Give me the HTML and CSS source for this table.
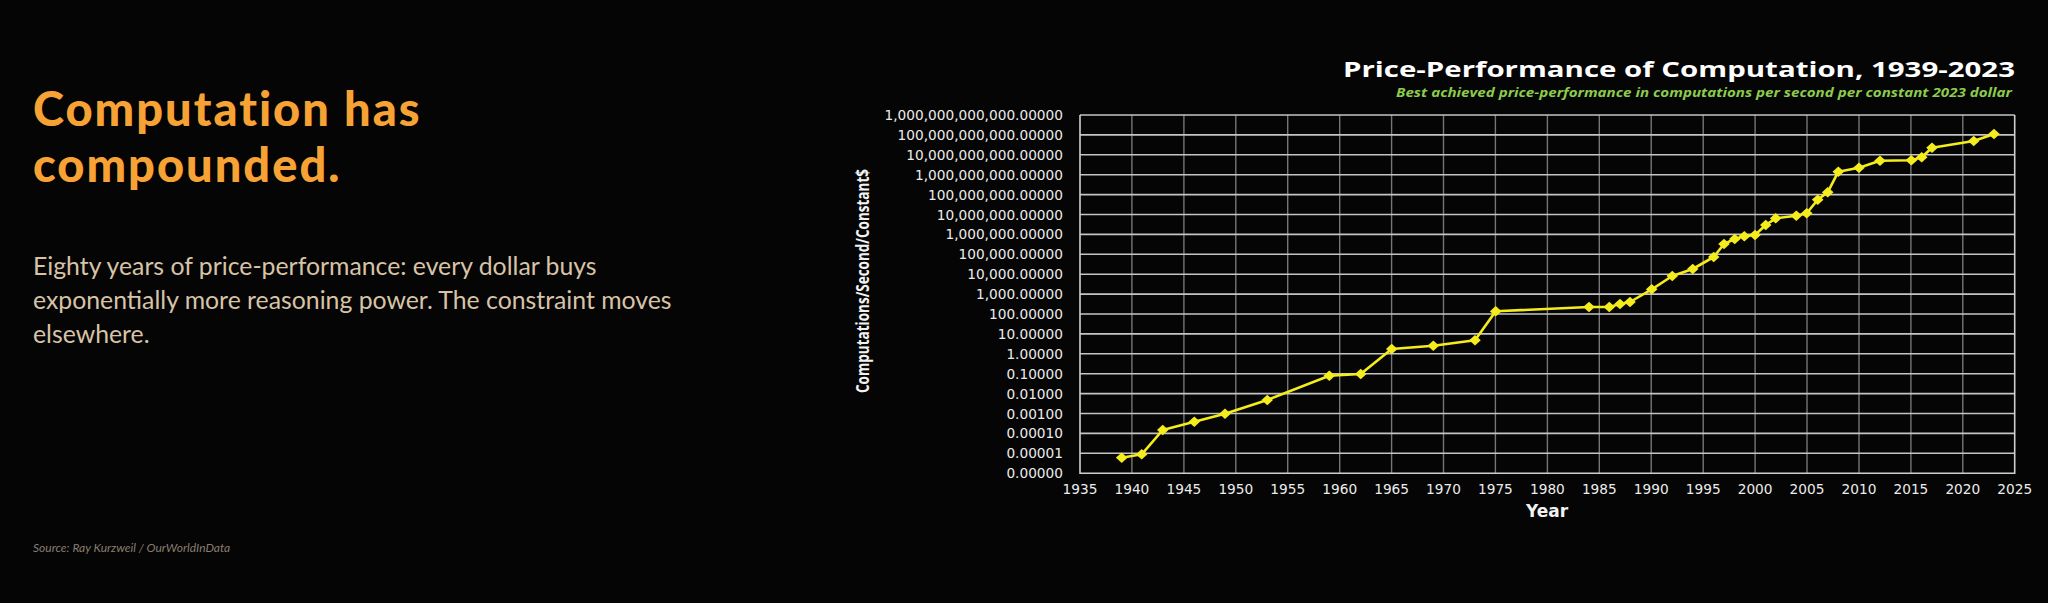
FILE: index.html
```html
<!DOCTYPE html>
<html lang="en">
<head>
<meta charset="utf-8">
<title>Computation has compounded.</title>
<link rel="stylesheet" href="styles.css">
</head>
<body>
<main class="slide">
  <section class="copy">
    <h1 class="headline">Computation has<br>compounded.</h1>
    <p class="lede">Eighty years of price-performance: every dollar buys exponentially more reasoning power. The constraint moves elsewhere.</p>
    <p class="source">Source: Ray Kurzweil / OurWorldInData</p>
  </section>
  <figure class="chart">
    <svg class="chart-svg" width="1208" height="603" viewBox="840 0 1208 603" xmlns="http://www.w3.org/2000/svg">
      <defs>
        <marker id="dia" viewBox="-6 -6 12 12" refX="0" refY="0" markerWidth="12" markerHeight="12" markerUnits="userSpaceOnUse">
          <path d="M0 -5.2 L5.8 0 L0 5.2 L-5.8 0 Z" class="dot"/>
        </marker>
      </defs>
      <text class="c-title" x="2015" y="77" text-anchor="end" textLength="672" lengthAdjust="spacingAndGlyphs">Price-Performance of Computation, 1939-2023</text>
      <text class="c-sub" x="2012" y="97" text-anchor="end" textLength="616" lengthAdjust="spacingAndGlyphs">Best achieved price-performance in computations per second per constant 2023 dollar</text>

      <path class="grid-v" d="M1131.9 115V473.2M1183.9 115V473.2M1235.8 115V473.2M1287.7 115V473.2M1339.7 115V473.2M1391.6 115V473.2M1443.5 115V473.2M1495.4 115V473.2M1547.4 115V473.2M1599.3 115V473.2M1651.2 115V473.2M1703.2 115V473.2M1755.1 115V473.2M1807 115V473.2M1859 115V473.2M1910.9 115V473.2M1962.8 115V473.2"/>
      <path class="grid-h" d="M1080 115H2014.7M1080 134.9H2014.7M1080 154.8H2014.7M1080 174.7H2014.7M1080 194.6H2014.7M1080 214.5H2014.7M1080 234.4H2014.7M1080 254.3H2014.7M1080 274.2H2014.7M1080 294.1H2014.7M1080 314H2014.7M1080 333.9H2014.7M1080 353.8H2014.7M1080 373.7H2014.7M1080 393.6H2014.7M1080 413.5H2014.7M1080 433.4H2014.7M1080 453.3H2014.7"/>
      <path class="axis" d="M1080 115V473.2H2014.7V115"/>

      <g class="ylab" text-anchor="end">
        <text x="1063" y="120">1,000,000,000,000.00000</text>
        <text x="1063" y="139.9">100,000,000,000.00000</text>
        <text x="1063" y="159.8">10,000,000,000.00000</text>
        <text x="1063" y="179.7">1,000,000,000.00000</text>
        <text x="1063" y="199.6">100,000,000.00000</text>
        <text x="1063" y="219.5">10,000,000.00000</text>
        <text x="1063" y="239.4">1,000,000.00000</text>
        <text x="1063" y="259.3">100,000.00000</text>
        <text x="1063" y="279.2">10,000.00000</text>
        <text x="1063" y="299.1">1,000.00000</text>
        <text x="1063" y="319">100.00000</text>
        <text x="1063" y="338.9">10.00000</text>
        <text x="1063" y="358.8">1.00000</text>
        <text x="1063" y="378.7">0.10000</text>
        <text x="1063" y="398.6">0.01000</text>
        <text x="1063" y="418.5">0.00100</text>
        <text x="1063" y="438.4">0.00010</text>
        <text x="1063" y="458.3">0.00001</text>
        <text x="1063" y="478.2">0.00000</text>
      </g>

      <g class="xlab" text-anchor="middle">
        <text x="1080" y="494">1935</text>
        <text x="1131.9" y="494">1940</text>
        <text x="1183.9" y="494">1945</text>
        <text x="1235.8" y="494">1950</text>
        <text x="1287.7" y="494">1955</text>
        <text x="1339.7" y="494">1960</text>
        <text x="1391.6" y="494">1965</text>
        <text x="1443.5" y="494">1970</text>
        <text x="1495.4" y="494">1975</text>
        <text x="1547.4" y="494">1980</text>
        <text x="1599.3" y="494">1985</text>
        <text x="1651.2" y="494">1990</text>
        <text x="1703.2" y="494">1995</text>
        <text x="1755.1" y="494">2000</text>
        <text x="1807" y="494">2005</text>
        <text x="1859" y="494">2010</text>
        <text x="1910.9" y="494">2015</text>
        <text x="1962.8" y="494">2020</text>
        <text x="2014.7" y="494">2025</text>
      </g>

      <text class="x-title" x="1547" y="517" text-anchor="middle">Year</text>
      <text class="y-title" x="0" y="0" text-anchor="middle" textLength="224" lengthAdjust="spacingAndGlyphs" transform="translate(868.5 281) rotate(-90)">Computations/Second/Constant$</text>

      <polyline class="series" marker-start="url(#dia)" marker-mid="url(#dia)" marker-end="url(#dia)"
        points="1121.7,457.7 1141.7,454.3 1162.7,430 1194.3,421.7 1225,413.7 1267.3,400 1329.3,375.7 1360.7,374 1391.7,349 1433.3,345.7 1475,340.3 1495.7,311.3 1589,307 1609.3,307 1620,304 1630,302 1651.7,289.3 1672.3,276 1692.7,269 1713.7,257 1724,244 1734.7,239 1744.3,236.3 1755,235 1765.7,225 1775.7,218.3 1796.3,215.7 1806.7,213.3 1817.7,199.7 1827.7,192.3 1838.3,171.7 1859,167.7 1880,160.7 1911.3,160.3 1921.7,157.3 1932,147.7 1973.7,141 1994,134"/>
    </svg>
  </figure>
</main>
</body>
</html>
```

FILE: styles.css
```css
html, body {
  margin: 0;
  padding: 0;
  background: #050505;
}

.slide {
  display: flex;
  width: 2048px;
  height: 603px;
  overflow: hidden;
  background: #050505;
}

.copy {
  flex: 0 0 840px;
  box-sizing: border-box;
  padding: 80px 0 0 33px;
  display: flex;
  flex-direction: column;
}

.headline {
  margin: 0;
  font-family: Lato, "Open Sans", sans-serif;
  font-weight: 900;
  font-size: 47px;
  line-height: 56px;
  letter-spacing: 2px;
  color: #f7a234;
}

.lede {
  margin: 57px 0 0;
  width: 705px;
  font-family: Lato, "Open Sans", sans-serif;
  font-weight: 400;
  font-size: 24.8px;
  line-height: 34px;
  color: #d8c3a7;
}

.source {
  margin: auto 0 47px;
  font-family: Lato, "Open Sans", sans-serif;
  font-style: italic;
  font-size: 12px;
  line-height: 16px;
  color: #8a7d70;
}

.chart {
  flex: 0 0 1208px;
  margin: 0;
}

.chart-svg {
  display: block;
}

.c-title {
  font-family: "Open Sans", sans-serif;
  font-weight: 700;
  font-size: 22px;
  fill: #ffffff;
}

.c-sub {
  font-family: "Open Sans", sans-serif;
  font-weight: 700;
  font-style: italic;
  font-size: 12px;
  fill: #8ccc4c;
}

.grid-v {
  fill: none;
  stroke: #767676;
  stroke-width: 1.4;
}

.grid-h {
  fill: none;
  stroke: #c4c4c4;
  stroke-width: 1.6;
}

.axis {
  fill: none;
  stroke: #cfcfcf;
  stroke-width: 1.6;
}

.ylab text,
.xlab text {
  font-family: "DejaVu Sans", sans-serif;
  font-size: 13.7px;
  fill: #ececec;
}

.x-title {
  font-family: "DejaVu Sans", sans-serif;
  font-weight: 700;
  font-size: 17px;
  fill: #f2f2f2;
}

.y-title {
  font-family: "Open Sans", sans-serif;
  font-weight: 700;
  font-size: 18px;
  fill: #f2f2f2;
}

.series {
  fill: none;
  stroke: #f4ec1c;
  stroke-width: 2.6;
  stroke-linejoin: round;
}

.dot {
  fill: #f4ec1c;
}
```
